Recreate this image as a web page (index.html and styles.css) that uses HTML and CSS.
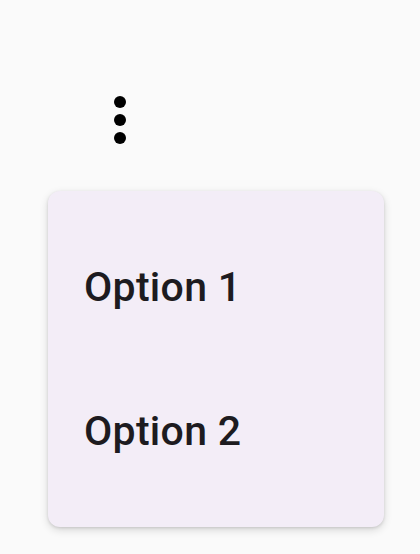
FILE: index.html
```html
<!DOCTYPE html>
<html lang="en">
<head>
    <meta charset="UTF-8">
    <meta name="viewport" content="width=device-width, initial-scale=1.0">
    <title>Menu</title>
    <link rel="stylesheet" href="styles.css">
</head>
<body>

    <div class="anchor">
        <button class="more-btn" aria-label="More options">
            <svg width="72" height="72" viewBox="0 0 24 24">
                <circle cx="12" cy="6" r="2" fill="#000"/>
                <circle cx="12" cy="12" r="2" fill="#000"/>
                <circle cx="12" cy="18" r="2" fill="#000"/>
            </svg>
        </button>
    </div>

    <div class="menu">
        <div class="menu-item">Option 1</div>
        <div class="menu-item">Option 2</div>
    </div>

</body>
</html>
```

FILE: styles.css
```css
* {
    margin: 0;
    padding: 0;
    box-sizing: border-box;
}

body {
    background-color: #fafafa;
    font-family: Roboto, "Noto Sans", sans-serif;
    width: 420px;
    height: 554px;
    overflow: hidden;
}

.anchor {
    padding: 84px 0 0 84px;
}

.more-btn {
    display: block;
    width: 72px;
    height: 72px;
    background: none;
    border: none;
}

.more-btn svg {
    display: block;
}

.menu {
    margin: 35px 0 0 48px;
    width: 336px;
    padding: 24px 0;
    background-color: #f3edf7;
    border-radius: 12px;
    box-shadow: 0 3px 8px rgba(0, 0, 0, 0.14), 0 1px 3px rgba(0, 0, 0, 0.12);
}

.menu-item {
    height: 144px;
    padding: 0 36px;
    display: flex;
    align-items: center;
    font-size: 41px;
    font-weight: 500;
    letter-spacing: 0.3px;
    color: #1d1b20;
}
```
